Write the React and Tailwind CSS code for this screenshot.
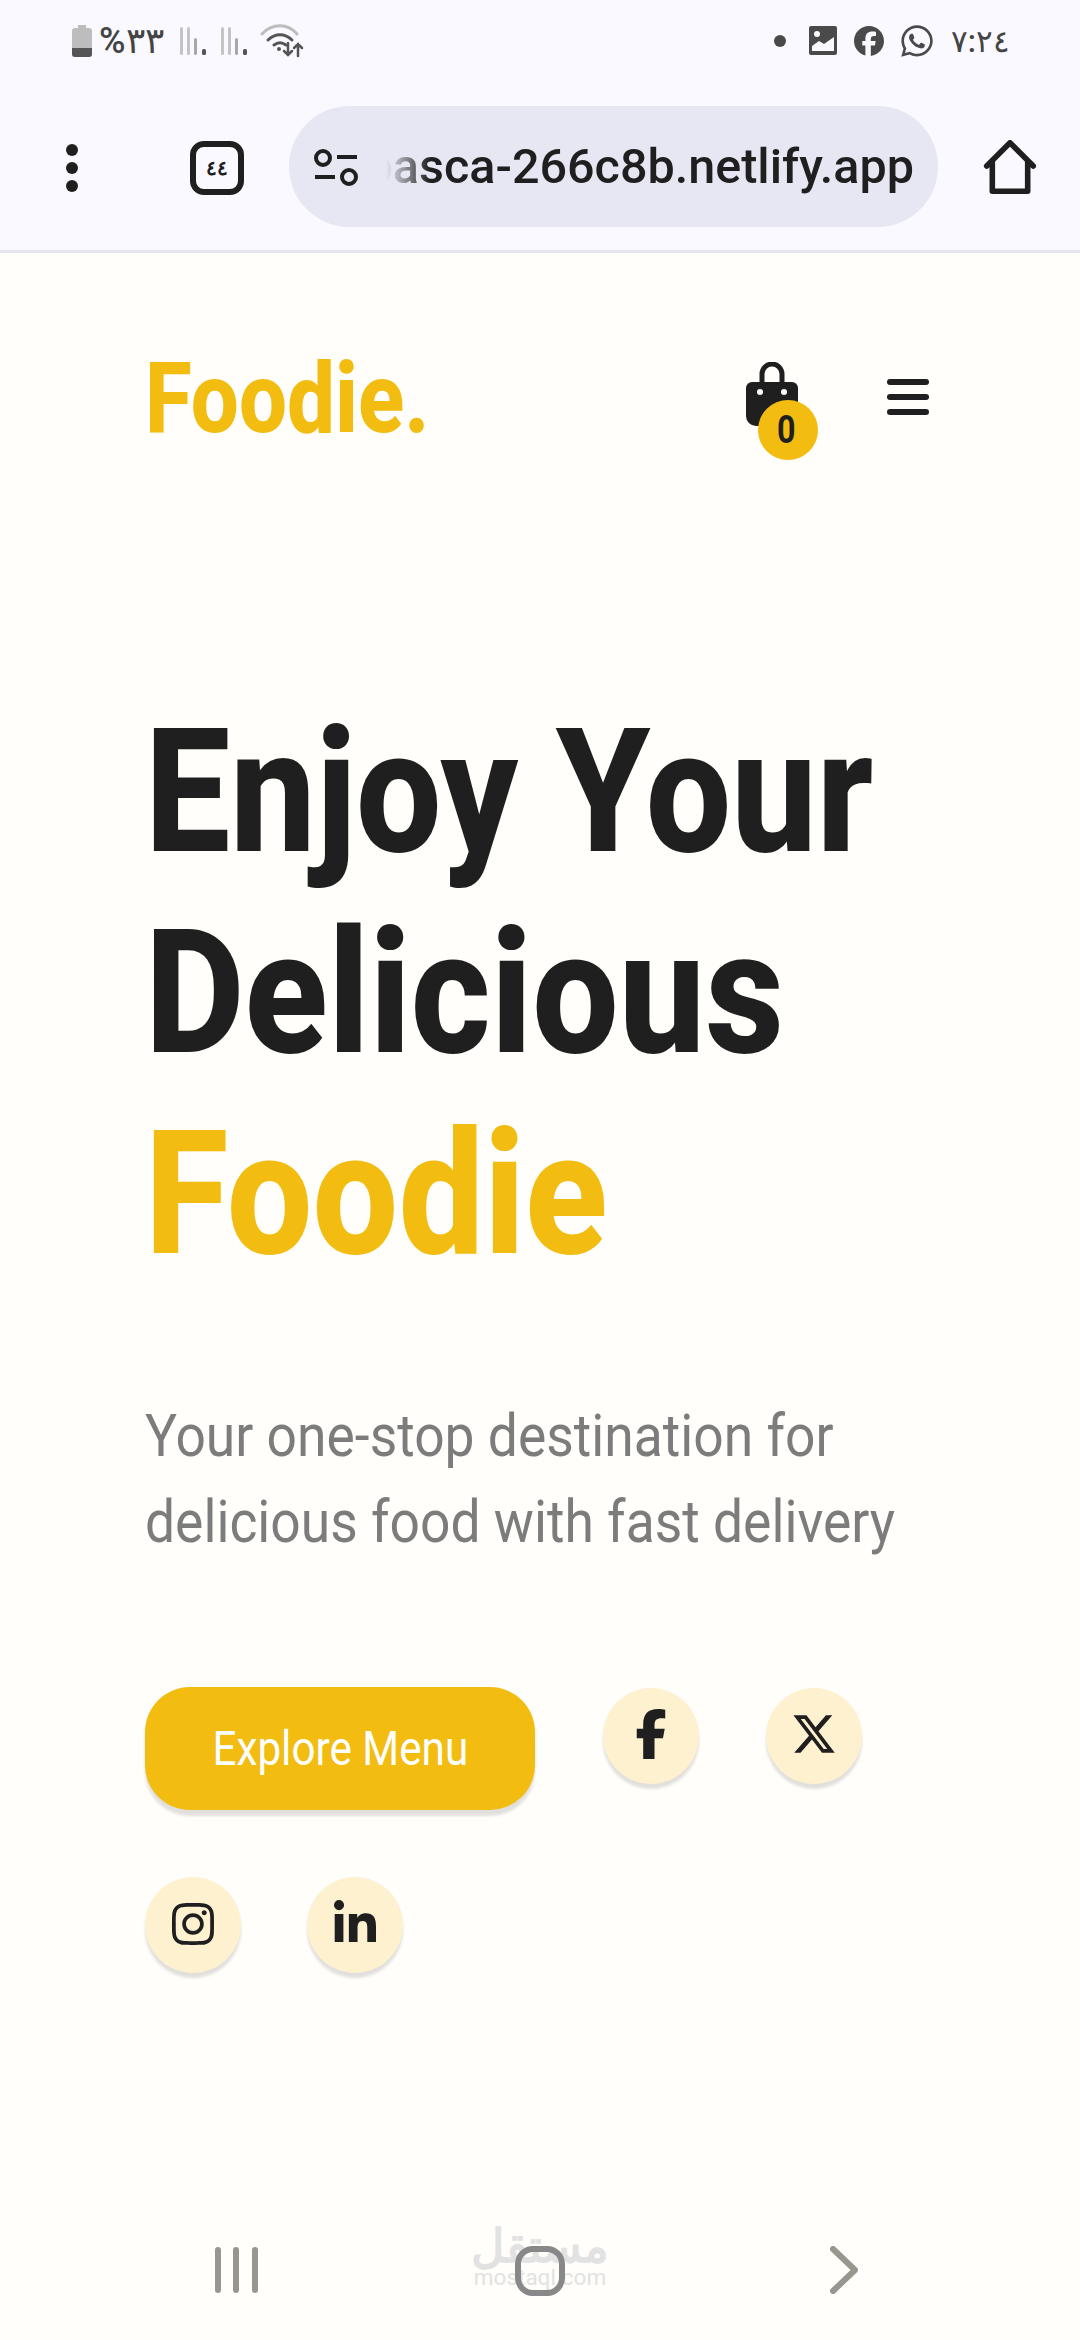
import React from "react";
import { FaFacebookF, FaXTwitter, FaInstagram, FaLinkedinIn, FaFacebook, FaWhatsapp } from "react-icons/fa6";

const Cond = ({ children, className = "", s = "" }) => (
  <span className={`inline-block origin-left whitespace-nowrap ${s} ${className}`}>{children}</span>
);

const Bars = () => (
  <svg width="34" height="30" viewBox="0 0 34 30">
    <rect x="1" y="1" width="3" height="28" rx="1.5" fill="#c4c4c4" />
    <rect x="8" y="1" width="3" height="28" rx="1.5" fill="#c4c4c4" />
    <rect x="15" y="12" width="3" height="17" rx="1.5" fill="#a8a8a8" />
    <rect x="23" y="23" width="4" height="6" rx="1.5" fill="#555" />
  </svg>
);

function StatusBar() {
  return (
    <div className="h-[72px] flex items-center justify-between pl-[72px] pr-[70px] pt-[10px] text-[#444]">
      <div className="flex items-center">
        <svg width="20" height="32" viewBox="0 0 20 32" className="mr-[7px]">
          <path d="M6 0h8v3h3a3 3 0 0 1 3 3v23a3 3 0 0 1-3 3H3a3 3 0 0 1-3-3V6a3 3 0 0 1 3-3h3z" fill="#bdbdbd" />
          <path d="M0 23h20v6a3 3 0 0 1-3 3H3a3 3 0 0 1-3-3z" fill="#555" />
        </svg>
        <span dir="ltr" className="text-[36px] leading-none font-[Roboto,'Noto_Sans',sans-serif] font-medium w-[66px] whitespace-nowrap">%٣٣</span>
        <div className="flex ml-[14px] gap-[7px]"><Bars /><Bars /></div>
        <svg width="44" height="36" viewBox="0 0 44 36" fill="none" strokeLinecap="round" className="ml-[6px]">
          <path d="M2 11C12 0 28 0 37 11" stroke="#bdbdbd" strokeWidth="3" />
          <path d="M8 17c7-7 17-7 24 0" stroke="#555" strokeWidth="3" />
          <path d="M14 22c4-3 8-3 12 0" stroke="#555" strokeWidth="3" />
          <circle cx="19" cy="26" r="2" fill="#555" />
          <path d="M28 20v12m-4-4 4 4 4-4M38 33V21m-4 4 4-4 4 4" stroke="#555" strokeWidth="2.5" />
        </svg>
      </div>
      <div className="flex items-center">
        <div className="w-[12px] h-[12px] rounded-full bg-[#4a4a4a] mr-[23px]" />
        <svg width="28" height="30" viewBox="0 0 28 30" className="mr-[17px]">
          <rect width="28" height="29" rx="2" fill="#4a4a4a" />
          <circle cx="8" cy="8" r="3" fill="#f9f9ff" />
          <path d="M3 25v-5l7-5 5 3 10-7v14z" fill="#f9f9ff" />
        </svg>
        <FaFacebook className="text-[30px] text-[#4a4a4a] mr-[15px]" />
        <FaWhatsapp className="text-[36px] text-[#4a4a4a] mr-[16px]" />
        <span dir="ltr" className="text-[31px] leading-none font-[Roboto,'Noto_Sans',sans-serif] font-medium whitespace-nowrap">٧:٢٤</span>
      </div>
    </div>
  );
}

function Toolbar() {
  return (
    <div className="h-[181px] flex items-start border-b-[3px] border-[#e6e6ef] pt-[34px]">
      <div className="w-[72px] h-[124px] ml-[36px] flex flex-col items-center justify-center gap-[6px]">
        <span className="w-[12px] h-[12px] rounded-full bg-[#1f1f1f]" />
        <span className="w-[12px] h-[12px] rounded-full bg-[#1f1f1f]" />
        <span className="w-[12px] h-[12px] rounded-full bg-[#1f1f1f]" />
      </div>
      <div className="w-[54px] h-[54px] mt-[35px] ml-[82px] rounded-[14px] border-[6px] border-[#1f1f1f] flex items-center justify-center text-[20px] tracking-[4px] leading-none font-bold text-[#1f1f1f] font-[Roboto,'Noto_Sans',sans-serif]">
        ٤٤
      </div>
      <div className="ml-[45px] w-[649px] h-[121px] rounded-full bg-[#e6e7f3] flex items-center pl-[24px] pr-[24px]">
        <svg width="46" height="38" viewBox="0 0 46 38" fill="none" stroke="#1f1f1f" strokeWidth="4" className="shrink-0">
          <circle cx="10" cy="10" r="7" />
          <path d="M24 9h20M2 29h20" />
          <circle cx="36" cy="29" r="7" />
        </svg>
        <div className="relative flex-1 min-w-0 ml-[27px] overflow-hidden flex justify-end">
          <span className="whitespace-nowrap text-[48.5px] leading-[60px] text-[#1f1f1f] font-[Roboto,sans-serif] font-medium">pasca-266c8b.netlify.app</span>
          <div className="absolute left-0 top-0 bottom-0 w-[44px] bg-gradient-to-r from-[#e6e7f3] to-transparent" />
        </div>
      </div>
      <svg width="54" height="54" viewBox="0 0 56 58" fill="none" stroke="#1f1f1f" strokeWidth="6" strokeLinejoin="round" strokeLinecap="round" className="ml-[45px] mt-[34px]">
        <path d="M3 28 28 3l25 25M9 23v32h38V23" />
      </svg>
    </div>
  );
}

const Social = ({ children }) => (
  <div className="w-[96px] h-[96px] rounded-full bg-[#fdf1d0] text-[#1f1f1f] flex items-center justify-center shadow-[0_5px_3px_rgba(0,0,0,0.12)]">
    {children}
  </div>
);

function Hero() {
  return (
    <main className="flex-1 pl-[145px] pr-[151px] font-[Roboto,sans-serif]">
      <div className="flex items-center justify-between h-[292px]">
        <Cond s="scale-x-[0.87]" className="text-[98px] leading-none font-[800] text-[#f2bc11]">Foodie.</Cond>
        <div className="flex items-center">
          <div className="relative w-[56px] h-[66px] mr-[87px] -mt-[8px]">
            <svg width="56" height="66" viewBox="0 0 56 66">
              <path d="M18 20v-8a10 10 0 0 1 20 0v8" fill="none" stroke="#1f1f1f" strokeWidth="5" />
              <path d="M8 20h40a6 6 0 0 1 6 6v28a10 10 0 0 1-10 10H12A10 10 0 0 1 2 54V26a6 6 0 0 1 6-6z" fill="#1f1f1f" />
              <circle cx="16" cy="30" r="3" fill="#fffefa" />
              <circle cx="40" cy="30" r="3" fill="#fffefa" />
            </svg>
            <div className="absolute left-[14px] top-[38px] w-[60px] h-[60px] rounded-full bg-[#f2bc11] flex items-center justify-center text-[38px] font-bold text-[#1f1f1f]">
              <Cond s="scale-x-[0.85] origin-center">0</Cond>
            </div>
          </div>
          <div className="w-[42px] flex flex-col gap-[9px] -mt-[4px]">
            <span className="h-[6px] rounded-full bg-[#1f1f1f]" />
            <span className="h-[6px] rounded-full bg-[#1f1f1f]" />
            <span className="h-[6px] rounded-full bg-[#1f1f1f]" />
          </div>
        </div>
      </div>
      <h1 className="mt-[147px] text-[172px] leading-[201px] font-[800] text-[#1f1f1f] flex flex-col items-start">
        <Cond s="scale-x-[0.883]">Enjoy Your</Cond>
        <Cond s="scale-x-[0.893]">Delicious</Cond>
        <Cond s="scale-x-[0.885]" className="text-[#f2bc11]">Foodie</Cond>
      </h1>
      <p className="mt-[98px] text-[60px] leading-[86px] text-[#7c7c7c] flex flex-col items-start">
        <Cond s="scale-x-[0.89]">Your one-stop destination for</Cond>
        <Cond s="scale-x-[0.89]">delicious food with fast delivery</Cond>
      </p>
      <div className="mt-[122px] -mr-[100px] flex flex-wrap items-start gap-x-[66px] gap-y-[68px]">
        <div className="w-[390px] h-[123px] -mr-[2px] rounded-[45px] bg-[#f2bc11] flex items-center justify-center text-white text-[48px] shadow-[0_6px_3px_rgba(0,0,0,0.12)]">
          <span className="inline-block whitespace-nowrap scale-x-[0.88] origin-center">Explore Menu</span>
        </div>
        <div className="mt-[1px] ml-[4px] flex gap-[67px]">
          <Social><FaFacebookF className="text-[50px] -mt-[4px]" /></Social>
          <Social><FaXTwitter className="text-[46px] -mt-[4px]" /></Social>
        </div>
        <div className="w-full -mt-[1px] flex gap-[66px]">
          <Social><FaInstagram className="text-[48px] -mt-[3px]" /></Social>
          <Social><FaLinkedinIn className="text-[48px] -mt-[3px]" /></Social>
        </div>
      </div>
    </main>
  );
}

function NavBar() {
  return (
    <div className="relative h-[130px] flex items-start justify-between pl-[215px] pr-[222px] pt-[36px]">
      <svg width="44" height="48" viewBox="0 0 44 48" fill="#97968f">
        <rect x="0" y="1" width="6" height="46" rx="3" />
        <rect x="18" y="1" width="6" height="46" rx="3" />
        <rect x="37" y="1" width="6" height="46" rx="3" />
      </svg>
      <svg width="50" height="50" viewBox="0 0 50 50" fill="none" stroke="#888" strokeWidth="6" className="relative z-10 -ml-[10px]">
        <rect x="3" y="3" width="44" height="44" rx="15" />
      </svg>
      <svg width="28" height="48" viewBox="0 0 28 48" fill="none" stroke="#97968f" strokeWidth="6" strokeLinecap="round" strokeLinejoin="round">
        <path d="M3 3l22 21L3 45" />
      </svg>
      <div className="absolute left-[474px] top-[12px] w-[132px] flex flex-col items-center text-[#e2e2e2] font-[Roboto,sans-serif] leading-none">
        <span dir="rtl" className="text-[46px] font-bold font-['Noto_Sans',sans-serif] leading-[44px]">مستقل</span>
        <span className="text-[22.5px] whitespace-nowrap">mostaql.com</span>
      </div>
    </div>
  );
}

export default function App() {
  return (
    <div className="w-[1080px] h-[2340px] flex flex-col bg-[#fffefa] overflow-hidden">
      <div className="bg-[#f9f9ff]">
        <StatusBar />
        <Toolbar />
      </div>
      <Hero />
      <NavBar />
    </div>
  );
}
